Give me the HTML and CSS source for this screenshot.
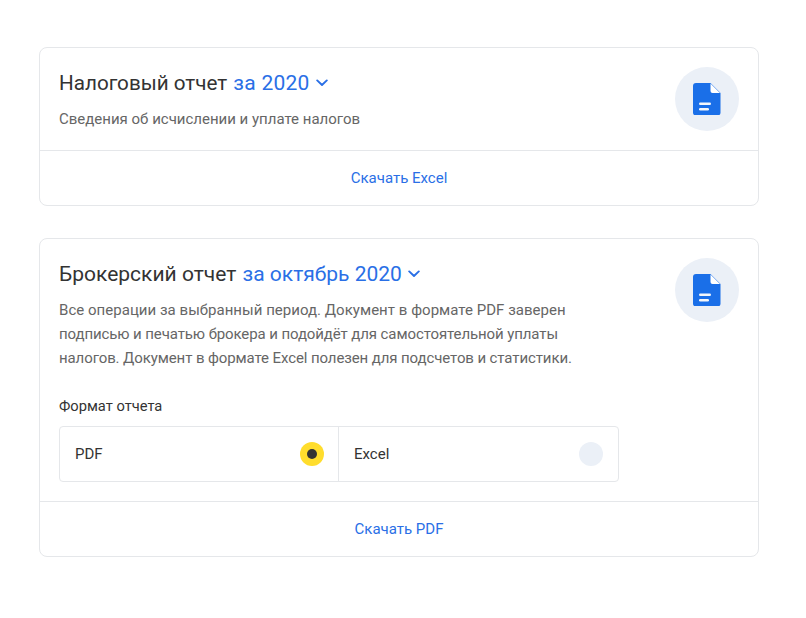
FILE: index.html
```html
<!DOCTYPE html>
<html lang="ru">
<head>
<meta charset="utf-8">
<title>Отчеты</title>
<link rel="stylesheet" href="styles.css">
</head>
<body>
<main class="page">
  <section class="card">
    <div class="card-body card-body--short">
      <div class="card-main">
        <h2 class="title">Налоговый отчет <a class="period period--short">за 2020<svg class="chevron" viewBox="0 0 12 8"><path d="M1.200 1.400 6 6l4.800-4.600" fill="none" stroke="currentColor" stroke-width="1.900" stroke-linecap="round" stroke-linejoin="round"/></svg></a></h2>
        <p class="text">Сведения об исчислении и уплате налогов</p>
      </div>
      <div class="icon-circle"><svg class="doc" viewBox="0 0 27.500 32.500"><path d="M3 0h14.500l10 10v19.500a3 3 0 0 1-3 3H3a3 3 0 0 1-3-3V3a3 3 0 0 1 3-3z" fill="#1a6fe8"/><path d="M17.500 0.500v7.500a2 2 0 0 0 2 2h7.500z" fill="#fff"/><rect x="6" y="19.500" width="12" height="2.600" rx="1.300" fill="#f4f7fb"/><rect x="6" y="25" width="10" height="2.600" rx="1.300" fill="#f4f7fb"/></svg></div>
    </div>
    <a class="card-action">Скачать Excel</a>
  </section>
  <section class="card">
    <div class="card-body">
      <div class="card-main">
        <h2 class="title title--wide">Брокерский отчет <a class="period">за октябрь 2020<svg class="chevron" viewBox="0 0 12 8"><path d="M1.200 1.400 6 6l4.800-4.600" fill="none" stroke="currentColor" stroke-width="1.900" stroke-linecap="round" stroke-linejoin="round"/></svg></a></h2>
        <p class="text"><span class="line line--wide">Все операции за выбранный период. Документ в формате PDF заверен</span><span class="line line--tight">подписью и печатью брокера и подойдёт для самостоятельной уплаты</span><span class="line line--tight">налогов. Документ в формате Excel полезен для подсчетов и статистики.</span></p>
        <div class="format-label">Формат отчета</div>
        <div class="format">
          <div class="option"><span>PDF</span><span class="radio radio--on"></span></div>
          <div class="option"><span>Excel</span><span class="radio"></span></div>
        </div>
      </div>
      <div class="icon-circle"><svg class="doc" viewBox="0 0 27.500 32.500"><path d="M3 0h14.500l10 10v19.500a3 3 0 0 1-3 3H3a3 3 0 0 1-3-3V3a3 3 0 0 1 3-3z" fill="#1a6fe8"/><path d="M17.500 0.500v7.500a2 2 0 0 0 2 2h7.500z" fill="#fff"/><rect x="6" y="19.500" width="12" height="2.600" rx="1.300" fill="#f4f7fb"/><rect x="6" y="25" width="10" height="2.600" rx="1.300" fill="#f4f7fb"/></svg></div>
    </div>
    <a class="card-action">Скачать PDF</a>
  </section>
</main>
</body>
</html>
```
FILE: styles.css
```css
* { box-sizing: border-box; }
html, body { margin: 0; background: #fff; }
body {
  font-family: Roboto, "Noto Sans", sans-serif;
  color: #333;
  height: 618px;
  overflow: hidden;
}
.page {
  width: 720px;
  margin-left: 39px;
  padding-top: 47px;
  display: flex;
  flex-direction: column;
  gap: 32px;
}
.card {
  border: 1px solid #e5e7ea;
  border-radius: 8px;
}
.card-body {
  display: flex;
  justify-content: space-between;
  padding: 19px;
}
.card-body--short { height: 102px; }
.card-main { width: 560px; }
.title {
  margin: 0;
  font-size: 20.650px;
  line-height: 32px;
  font-weight: 400;
  color: #333;
}
.title--wide { font-size: 21px; }
.period { color: #2a6fe6; margin-left: 1px; font-size: 21px; }
.period--short { letter-spacing: 0.250px; }
.chevron {
  width: 12px;
  height: 8px;
  margin-left: 6px;
  vertical-align: 3px;
}
.text {
  margin: 8px 0 0;
  font-size: 15px;
  line-height: 24px;
  color: #666;
  white-space: nowrap;
}
.line { display: block; }
.line--wide { letter-spacing: 0.030px; }
.line--tight { letter-spacing: -0.100px; }
.format-label {
  margin-top: 24px;
  font-size: 14.700px;
  line-height: 24px;
  color: #333;
}
.format {
  display: flex;
  margin-top: 8px;
  height: 56px;
  border: 1px solid #e5e7ea;
  border-radius: 4px;
}
.option {
  flex: 0 0 50%;
  display: flex;
  align-items: center;
  justify-content: space-between;
  padding: 0 15px;
  font-size: 15px;
}
.option:first-child { border-right: 1px solid #e5e7ea; padding-right: 14px; }
.radio {
  width: 24px;
  height: 24px;
  border-radius: 50%;
  background: #ebf0f7;
  display: flex;
  align-items: center;
  justify-content: center;
}
.radio--on { background: #ffdd2d; }
.radio--on::after {
  content: "";
  width: 10px;
  height: 10px;
  border-radius: 50%;
  background: #333;
}
.icon-circle {
  width: 64px;
  height: 64px;
  border-radius: 50%;
  background: #ebf0f7;
  display: flex;
  align-items: center;
  justify-content: center;
  flex: none;
}
.doc { width: 27.500px; height: 32.500px; }
.card-action {
  display: block;
  border-top: 1px solid #e5e7ea;
  height: 55px;
  line-height: 54px;
  text-align: center;
  font-size: 15px;
  color: #2a6fe6;
}
```
